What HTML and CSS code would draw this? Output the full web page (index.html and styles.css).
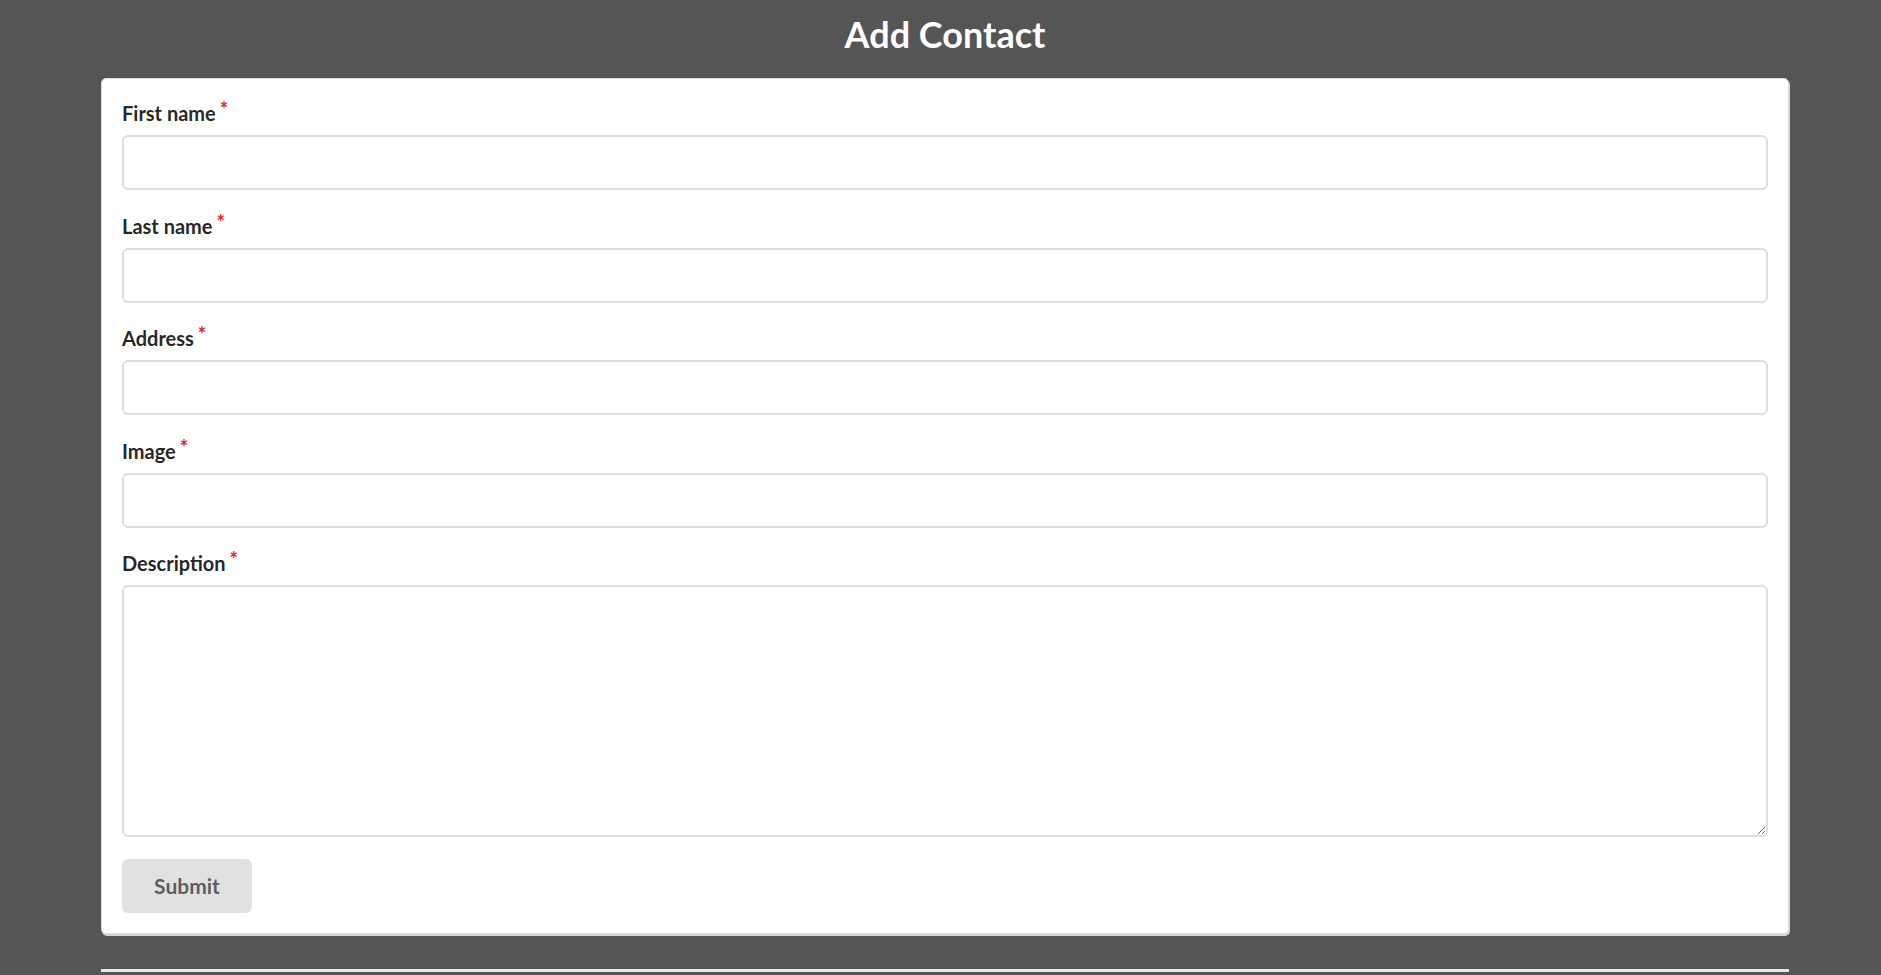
FILE: index.html
```html
<!DOCTYPE html>
<html lang="en">
<head>
<meta charset="utf-8">
<title>Add Contact</title>
<link rel="stylesheet" href="styles.css">
</head>
<body>
<div class="page">
  <h1 class="title">Add Contact</h1>
  <form class="card">
    <div class="field">
      <label class="label">First name</label>
      <input class="input" type="text">
    </div>
    <div class="field">
      <label class="label">Last name</label>
      <input class="input" type="text">
    </div>
    <div class="field">
      <label class="label">Address</label>
      <input class="input" type="text">
    </div>
    <div class="field">
      <label class="label">Image</label>
      <input class="input" type="text">
    </div>
    <div class="field">
      <label class="label">Description</label>
      <textarea class="textarea"></textarea>
    </div>
    <button class="button" type="button">Submit</button>
  </form>
  <div class="divider"></div>
</div>
</body>
</html>
```

FILE: styles.css
```css
html, body {
  margin: 0;
  padding: 0;
  background: #555555;
  font-family: Lato, "Open Sans", "Liberation Sans", sans-serif;
  overflow: hidden;
}

.page {
  margin: 0 92px 0 101px;
  display: flex;
  flex-direction: column;
}

.title {
  margin: 7px 0 17px;
  font-size: 36px;
  line-height: 54px;
  font-weight: 700;
  color: #ffffff;
  text-align: center;
}

.card {
  background: #ffffff;
  border: 1px solid #dddddd;
  border-radius: 5px;
  box-shadow: 1px 2px 0 0 #d6d6d6;
  padding: 20px;
  display: flex;
  flex-direction: column;
  align-items: flex-start;
}

.field {
  align-self: stretch;
  display: flex;
  flex-direction: column;
  margin-bottom: 21.5px;
}

.label {
  font-size: 20px;
  line-height: 28px;
  font-weight: 700;
  color: rgba(0, 0, 0, 0.87);
  margin-bottom: 8px;
}

.label::after {
  content: "*";
  display: inline-block;
  vertical-align: top;
  margin: -0.2em 0 0 0.2em;
  color: #db2828;
}

.input,
.textarea {
  box-sizing: border-box;
  width: 100%;
  margin: 0;
  border: 2px solid #dedede;
  border-radius: 6px;
  background: #ffffff;
  font-family: inherit;
  font-size: 21px;
  outline: none;
}

.input {
  height: 55px;
  padding: 0 20px;
}

.textarea {
  height: 252px;
  padding: 16px 20px;
  resize: vertical;
  display: block;
}

.button {
  box-sizing: border-box;
  height: 54px;
  width: 130px;
  border: none;
  border-radius: 6px;
  background: #e0e1e2;
  color: rgba(0, 0, 0, 0.6);
  font-family: inherit;
  font-size: 21px;
  font-weight: 700;
  line-height: 21px;
  padding: 0;
  cursor: pointer;
}

.divider {
  margin-top: 35px;
  height: 3px;
  background: #e6e6e6;
}
```
